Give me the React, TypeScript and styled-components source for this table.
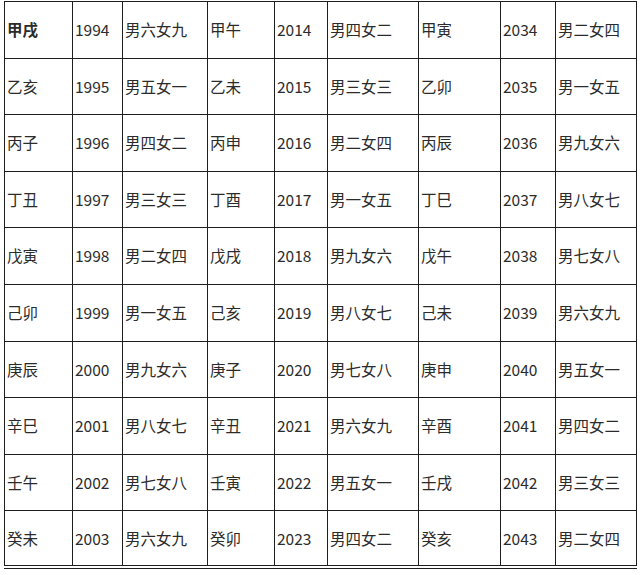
import React from 'react';
import styled, { createGlobalStyle } from 'styled-components';

const GlobalStyle = createGlobalStyle`
  html, body {
    margin: 0;
    padding: 0;
    background: #fff;
  }
  body {
    font-family: "Noto Sans CJK SC", "Noto Sans", sans-serif;
  }
`;

const Page = styled.div`
  padding: 1px 0 0 4px;
`;

const Table = styled.table`
  border-collapse: collapse;
  table-layout: fixed;
  width: 632px;
  border: 1px solid #1e1e1e;
  border-bottom: 4px double #1e1e1e;
`;

const Row = styled.tr`
  height: 56.6px;
`;

const Cell = styled.td<{ $bold?: boolean }>`
  border: 1px solid #1e1e1e;
  padding: 0 0 0 2px;
  font-size: 15.5px;
  line-height: 1;
  color: #2b2b2b;
  white-space: nowrap;
  overflow: hidden;
  vertical-align: middle;
  font-weight: ${p => (p.$bold ? 700 : 400)};
`;

const widths = [68, 50, 85, 67, 53, 91, 82, 55, 81];

const rows: string[][] = [
  ['甲戌', '1994', '男六女九', '甲午', '2014', '男四女二', '甲寅', '2034', '男二女四'],
  ['乙亥', '1995', '男五女一', '乙未', '2015', '男三女三', '乙卯', '2035', '男一女五'],
  ['丙子', '1996', '男四女二', '丙申', '2016', '男二女四', '丙辰', '2036', '男九女六'],
  ['丁丑', '1997', '男三女三', '丁酉', '2017', '男一女五', '丁巳', '2037', '男八女七'],
  ['戊寅', '1998', '男二女四', '戊戌', '2018', '男九女六', '戊午', '2038', '男七女八'],
  ['己卯', '1999', '男一女五', '己亥', '2019', '男八女七', '己未', '2039', '男六女九'],
  ['庚辰', '2000', '男九女六', '庚子', '2020', '男七女八', '庚申', '2040', '男五女一'],
  ['辛巳', '2001', '男八女七', '辛丑', '2021', '男六女九', '辛酉', '2041', '男四女二'],
  ['壬午', '2002', '男七女八', '壬寅', '2022', '男五女一', '壬戌', '2042', '男三女三'],
  ['癸未', '2003', '男六女九', '癸卯', '2023', '男四女二', '癸亥', '2043', '男二女四'],
];

const App: React.FC = () => {
  return (
    <Page>
      <GlobalStyle />
      <Table>
        <colgroup>
          {widths.map((w, i) => (
            <col key={i} style={{ width: w }} />
          ))}
        </colgroup>
        <tbody>
          {rows.map((r, ri) => (
            <Row key={ri}>
              {r.map((c, ci) => (
                <Cell key={ci} $bold={ri === 0 && ci === 0}>
                  {c}
                </Cell>
              ))}
            </Row>
          ))}
        </tbody>
      </Table>
    </Page>
  );
};

export default App;
